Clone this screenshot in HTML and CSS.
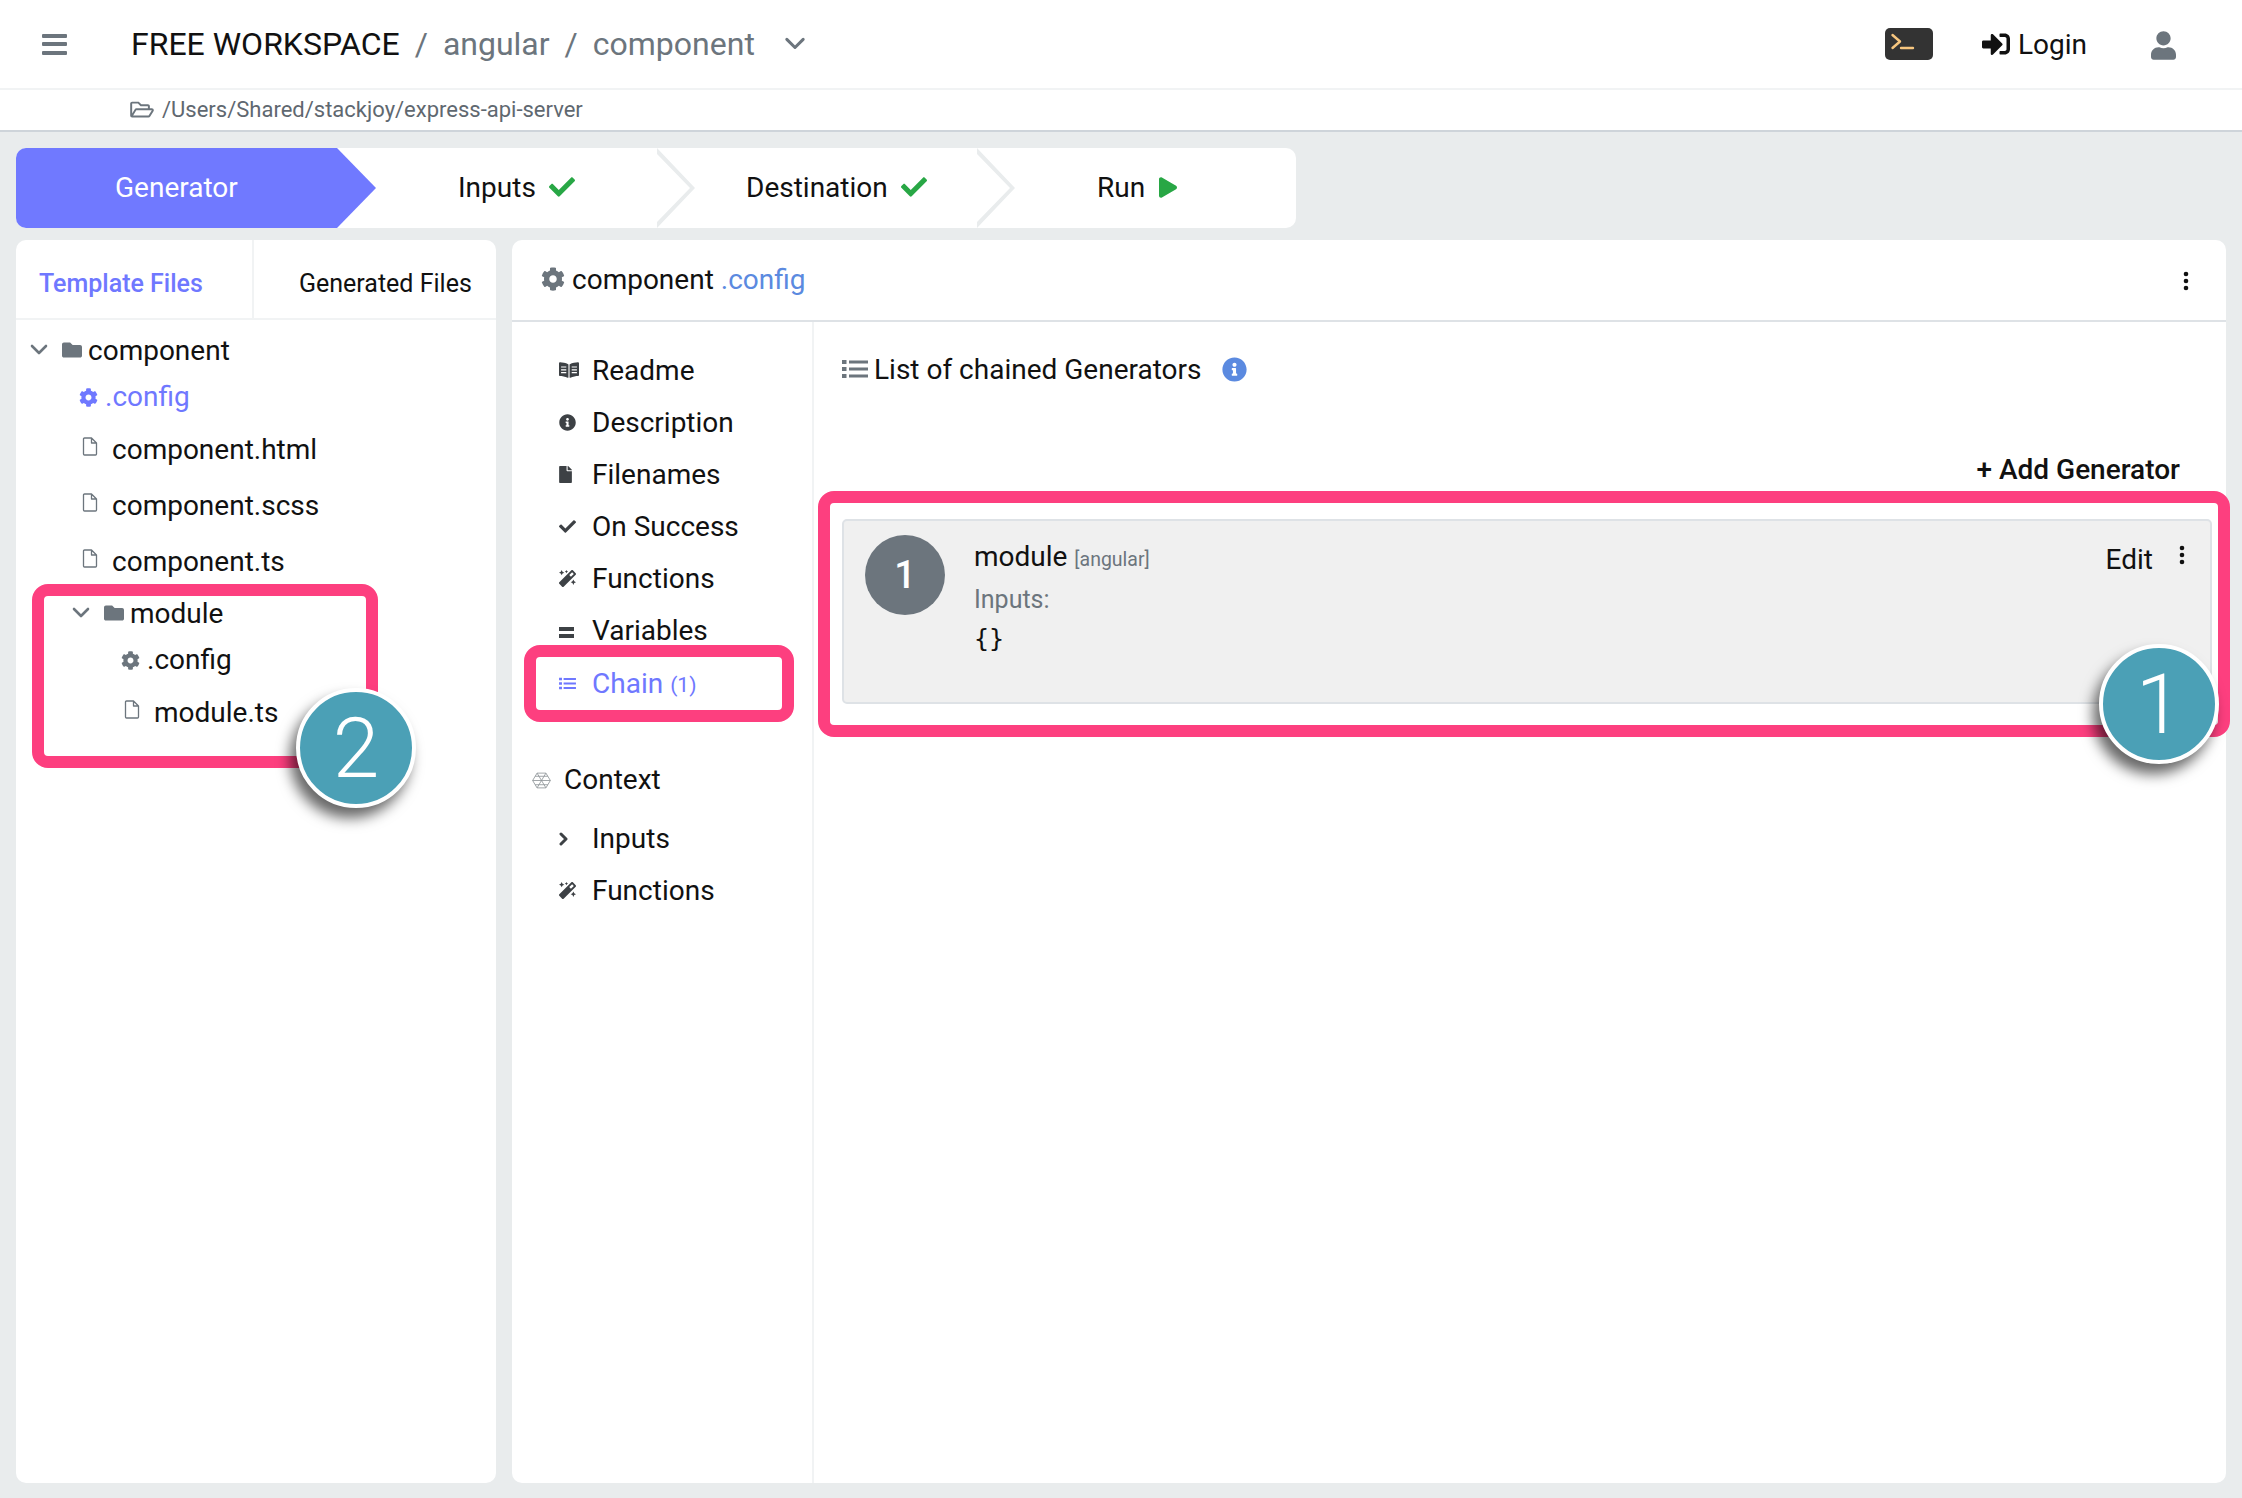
FILE: index.html
```html
<!DOCTYPE html>
<html lang="en">
<head>
<meta charset="utf-8">
<title>Generator</title>
<link rel="stylesheet" href="styles.css">
</head>
<body>
<svg class="defs" width="0" height="0" aria-hidden="true">
  <defs>
    <symbol id="i-cog" viewBox="0 0 512 512"><path d="M487.4 315.7l-42.6-24.6c4.3-23.2 4.3-47 0-70.2l42.6-24.6c4.9-2.8 7.1-8.6 5.5-14-11.1-35.6-30-67.8-54.7-94.6-3.8-4.1-10-5.1-14.8-2.3L380.8 110c-17.9-15.4-38.5-27.3-60.8-35.1V25.8c0-5.6-3.9-10.5-9.4-11.7-36.7-8.2-74.3-7.8-109.2 0-5.5 1.2-9.4 6.1-9.4 11.7V75c-22.2 7.9-42.8 19.8-60.8 35.1L88.7 85.5c-4.9-2.8-11-1.9-14.8 2.3-24.7 26.7-43.6 58.9-54.7 94.6-1.7 5.4.6 11.2 5.5 14L67.3 221c-4.3 23.2-4.3 47 0 70.2l-42.6 24.6c-4.9 2.8-7.1 8.6-5.5 14 11.1 35.6 30 67.8 54.7 94.6 3.8 4.1 10 5.1 14.8 2.3l42.6-24.6c17.9 15.4 38.5 27.3 60.8 35.1v49.2c0 5.6 3.9 10.5 9.4 11.7 36.7 8.2 74.3 7.8 109.2 0 5.5-1.2 9.4-6.1 9.4-11.7v-49.2c22.2-7.9 42.8-19.8 60.8-35.1l42.6 24.6c4.9 2.8 11 1.9 14.8-2.3 24.7-26.7 43.6-58.9 54.7-94.6 1.5-5.5-.7-11.3-5.6-14.1zM256 336c-44.1 0-80-35.9-80-80s35.9-80 80-80 80 35.9 80 80-35.9 80-80 80z"/></symbol>
    <symbol id="i-folder" viewBox="0 0 512 512"><path d="M464 128H272l-64-64H48C21.49 64 0 85.49 0 112v288c0 26.51 21.49 48 48 48h416c26.51 0 48-21.49 48-48V176c0-26.51-21.49-48-48-48z"/></symbol>
    <symbol id="i-file" viewBox="0 0 384 512"><path d="M224 136V0H24C10.7 0 0 10.7 0 24v464c0 13.3 10.7 24 24 24h336c13.3 0 24-10.7 24-24V160H248c-13.2 0-24-10.8-24-24zm160-14.1v6.1H256V0h6.1c6.4 0 12.5 2.5 17 7l97.9 98c4.5 4.5 7 10.6 7 16.9z"/></symbol>
    <symbol id="i-file-o" viewBox="0 0 16 19"><path d="M2.5 1h7l5 5v11a1 1 0 0 1-1 1h-11a1 1 0 0 1-1-1V2a1 1 0 0 1 1-1zM9.500 1v5h5" fill="none" stroke="currentColor" stroke-width="1.300" stroke-linejoin="round"/></symbol>
    <symbol id="i-folder-open" viewBox="0 0 576 512"><path d="M527.9 224H480v-48c0-26.500-21.500-48-48-48H272l-64-64H48C21.500 64 0 85.500 0 112v288c0 26.500 21.500 48 48 48h400c16.500 0 31.900-8.500 40.700-22.600l79.900-128c20-31.900-3-73.400-40.700-73.400zM48 118c0-3.300 2.700-6 6-6h134.100l64 64H426c3.300 0 6 2.700 6 6v42H152c-16.800 0-32.400 8.800-41.100 23.200L48 351.400zm400 282H72l77.200-128H528z"/></symbol>
    <symbol id="i-check" viewBox="0 0 512 512"><path d="M173.898 439.404l-166.400-166.400c-9.997-9.997-9.997-26.206 0-36.204l36.203-36.204c9.997-9.998 26.207-9.998 36.204 0L192 312.690 432.095 72.596c9.997-9.997 26.207-9.997 36.204 0l36.203 36.204c9.997 9.997 9.997 26.206 0 36.204l-294.400 294.401c-9.998 9.997-26.207 9.997-36.204-.001z"/></symbol>
    <symbol id="i-play" viewBox="0 0 448 512"><path d="M424.400 214.700L72.400 6.600C43.800-10.300 0 6.100 0 47.900V464c0 37.500 40.700 60.100 72.400 41.300l352-208c31.400-18.500 31.500-64.100 0-82.600z"/></symbol>
    <symbol id="i-login" viewBox="0 0 512 512"><path d="M416 448h-84c-6.600 0-12-5.400-12-12v-40c0-6.600 5.400-12 12-12h84c17.700 0 32-14.300 32-32V160c0-17.700-14.300-32-32-32h-84c-6.600 0-12-5.400-12-12V76c0-6.600 5.400-12 12-12h84c53 0 96 43 96 96v192c0 53-43 96-96 96zm-47-201L201 79c-15-15-41-4.500-41 17v96H24c-13.300 0-24 10.700-24 24v96c0 13.300 10.700 24 24 24h136v96c0 21.500 26 32 41 17l168-168c9.300-9.400 9.300-24.600 0-34z"/></symbol>
    <symbol id="i-user" viewBox="0 0 448 512"><path d="M224 256c70.700 0 128-57.300 128-128S294.700 0 224 0 96 57.300 96 128s57.300 128 128 128zm89.600 32h-16.700c-22.200 10.200-46.900 16-72.900 16s-50.600-5.800-72.900-16h-16.700C60.200 288 0 348.200 0 422.400V464c0 26.500 21.500 48 48 48h352c26.500 0 48-21.500 48-48v-41.600c0-74.200-60.200-134.400-134.400-134.400z"/></symbol>
    <symbol id="i-info" viewBox="0 0 512 512"><path d="M256 8C119.043 8 8 119.083 8 256c0 136.997 111.043 248 248 248s248-111.003 248-248C504 119.083 392.957 8 256 8zm0 110c23.196 0 42 18.804 42 42s-18.804 42-42 42-42-18.804-42-42 18.804-42 42-42zm56 254c0 6.627-5.373 12-12 12h-88c-6.627 0-12-5.373-12-12v-24c0-6.627 5.373-12 12-12h12v-64h-12c-6.627 0-12-5.373-12-12v-24c0-6.627 5.373-12 12-12h64c6.627 0 12 5.373 12 12v100h12c6.627 0 12 5.373 12 12v24z"/></symbol>
    <symbol id="i-book" viewBox="0 0 576 512"><path d="M542.220 32.050c-54.800 3.110-163.720 14.430-230.960 55.590-4.640 2.840-7.270 7.890-7.270 13.170v363.870c0 11.550 12.630 18.850 23.280 13.490 69.180-34.820 169.230-44.320 218.700-46.920 16.890-.89 30.020-14.430 30.020-30.660V62.750c.01-17.710-15.350-31.740-33.770-30.700zM264.730 87.640C197.500 46.480 88.580 35.170 33.780 32.050 15.360 31.010 0 45.040 0 62.750V400.600c0 16.240 13.130 29.780 30.020 30.660 49.490 2.600 149.590 12.110 218.770 46.950 10.620 5.350 23.210-1.940 23.210-13.460V100.630c0-5.290-2.620-10.140-7.270-12.990z"/><path d="M60 170h150M60 250h150M60 330h150M366 170h150M366 250h150M366 330h150" stroke="#fff" stroke-width="34"/></symbol>
    <symbol id="i-magic" viewBox="0 0 512 512"><path d="M224 96l16-32 32-16-32-16-16-32-16 32-32 16 32 16 16 32zM80 160l26.660-53.330L160 80l-53.340-26.670L80 0 53.340 53.330 0 80l53.340 26.670L80 160zm352 128l-26.660 53.330L352 368l53.340 26.670L432 448l26.660-53.330L512 368l-53.340-26.670L432 288zm70.620-193.770L417.770 9.380C411.530 3.120 403.340 0 395.150 0c-8.190 0-16.380 3.120-22.630 9.380L9.380 372.520c-12.500 12.500-12.500 32.760 0 45.250l84.850 84.850c6.250 6.250 14.440 9.370 22.620 9.370 8.190 0 16.380-3.120 22.630-9.370l363.140-363.150c12.500-12.480 12.500-32.750 0-45.240zM359.450 203.460l-50.910-50.910 86.600-86.600 50.910 50.910-86.600 86.600z"/></symbol>
    <symbol id="i-list" viewBox="0 0 26 20"><path d="M0 1h4.500v4H0zM0 8h4.500v4H0zM0 15h4.500v4H0zM7 1.500h19v3H7zM7 8.500h19v3H7zM7 15.500h19v3H7z"/></symbol>
    <symbol id="i-dots" viewBox="0 0 6 20"><circle cx="3" cy="3" r="2.300"/><circle cx="3" cy="10" r="2.300"/><circle cx="3" cy="17" r="2.300"/></symbol>
    <symbol id="i-chev" viewBox="0 0 18 12"><path d="M2 2l7 7 7-7" fill="none" stroke="currentColor" stroke-width="2.600" stroke-linecap="round" stroke-linejoin="round"/></symbol>
  </defs>
</svg>

<header class="topbar">
  <button class="burger" aria-label="Menu"><span></span><span></span><span></span></button>
  <div class="crumbs">
    <span class="crumb-root">FREE WORKSPACE</span>
    <span class="crumb-sep">/</span>
    <span class="crumb">angular</span>
    <span class="crumb-sep">/</span>
    <span class="crumb">component</span>
    <svg class="crumb-chev"><use href="#i-chev"/></svg>
  </div>
  <div class="top-actions">
    <svg class="terminal" viewBox="0 0 48 32"><rect width="48" height="32" rx="5" fill="#333"/><path d="M7.500 7l7.500 6.500L7.500 20" fill="none" stroke="#f7c67f" stroke-width="2.400" stroke-linecap="round" stroke-linejoin="round"/><path d="M16 20h12" stroke="#f7c67f" stroke-width="2.400" stroke-linecap="round"/></svg>
    <span class="login"><svg class="login-icon"><use href="#i-login"/></svg>Login</span>
    <svg class="user-icon"><use href="#i-user"/></svg>
  </div>
</header>
<div class="pathbar">
  <svg class="path-icon"><use href="#i-folder-open"/></svg>
  <span>/Users/Shared/stackjoy/express-api-server</span>
</div>

<main class="workspace">
  <nav class="stepper">
    <div class="step step-active">Generator</div>
    <div class="step step-inputs">Inputs<svg class="step-check"><use href="#i-check"/></svg><svg class="step-sep" viewBox="0 0 38 80"><path d="M0 0v6l33 34L0 74v6l38-40z" /></svg></div>
    <div class="step step-dest">Destination<svg class="step-check"><use href="#i-check"/></svg><svg class="step-sep" viewBox="0 0 38 80"><path d="M0 0v6l33 34L0 74v6l38-40z" /></svg></div>
    <div class="step step-run">Run<svg class="step-play"><use href="#i-play"/></svg></div>
  </nav>

  <div class="panels">
    <aside class="files">
      <div class="tabs">
        <div class="tab tab-active">Template Files</div>
        <div class="tab tab-plain">Generated Files</div>
      </div>
      <ul class="tree">
        <li class="row row-folder d0"><svg class="t-chev"><use href="#i-chev"/></svg><svg class="t-folder"><use href="#i-folder"/></svg>component</li>
        <li class="row row-config d0 is-current"><svg class="t-cog"><use href="#i-cog"/></svg>.config</li>
        <li class="row row-file d0"><svg class="t-file"><use href="#i-file-o"/></svg>component.html</li>
        <li class="row row-file d0"><svg class="t-file"><use href="#i-file-o"/></svg>component.scss</li>
        <li class="row row-file d0"><svg class="t-file"><use href="#i-file-o"/></svg>component.ts</li>
        <li class="row row-folder d1"><svg class="t-chev"><use href="#i-chev"/></svg><svg class="t-folder"><use href="#i-folder"/></svg>module</li>
        <li class="row row-config d1"><svg class="t-cog"><use href="#i-cog"/></svg>.config</li>
        <li class="row row-file d1"><svg class="t-file"><use href="#i-file-o"/></svg>module.ts</li>
      </ul>
    </aside>

    <section class="editor">
      <div class="editor-head">
        <svg class="head-cog"><use href="#i-cog"/></svg>
        <span>component</span><span class="head-ext">.config</span>
        <svg class="head-dots"><use href="#i-dots"/></svg>
      </div>
      <div class="editor-body">
        <ul class="side">
          <li class="side-row"><svg class="s-icon s-book"><use href="#i-book"/></svg>Readme</li>
          <li class="side-row"><svg class="s-icon s-round"><use href="#i-info"/></svg>Description</li>
          <li class="side-row"><svg class="s-icon s-file"><use href="#i-file"/></svg>Filenames</li>
          <li class="side-row"><svg class="s-icon s-check"><use href="#i-check"/></svg>On Success</li>
          <li class="side-row"><svg class="s-icon s-magic"><use href="#i-magic"/></svg>Functions</li>
          <li class="side-row"><span class="s-icon s-equals"></span>Variables</li>
          <li class="side-row side-current"><svg class="s-icon s-list"><use href="#i-list"/></svg>Chain<span class="side-count">(1)</span></li>
          <li class="side-row side-context"><svg class="s-hex" viewBox="0 0 18 16"><path d="M4.800 1h8.400L17.400 8l-4.200 7H4.800L.6 8zM4.800 1l8.400 14M13.200 1L4.800 15M.6 8h16.800M3 4h12M3 12h12" fill="none" stroke="#8f9599" stroke-width=".8"/></svg>Context</li>
          <li class="side-row side-first"><svg class="s-icon s-chevr" viewBox="0 0 10 14"><path d="M2 2l5 5-5 5" fill="none" stroke="currentColor" stroke-width="3" stroke-linecap="round" stroke-linejoin="round"/></svg>Inputs</li>
          <li class="side-row"><svg class="s-icon s-magic"><use href="#i-magic"/></svg>Functions</li>
        </ul>
        <div class="chain">
          <h2 class="chain-title"><svg class="chain-list"><use href="#i-list"/></svg>List of chained Generators<svg class="chain-info"><use href="#i-info"/></svg></h2>
          <div class="chain-add">+ Add Generator</div>
          <article class="card">
            <div class="card-num">1</div>
            <div class="card-main">
              <div class="card-title">module <span class="card-tag">[angular]</span></div>
              <div class="card-label">Inputs:</div>
              <code class="card-code">{}</code>
            </div>
            <div class="card-edit">Edit</div>
            <svg class="card-dots"><use href="#i-dots"/></svg>
          </article>
        </div>
      </div>
    </section>
  </div>
</main>

<div class="mark mark-tree"></div>
<div class="mark mark-chain"></div>
<div class="mark mark-card"></div>
<div class="badge badge-two">2</div>
<div class="badge badge-one">1</div>
</body>
</html>
```
FILE: styles.css
```css
* { box-sizing: border-box; }
html, body { margin: 0; padding: 0; }
body {
  width: 2242px;
  height: 1498px;
  overflow: hidden;
  position: relative;
  display: flex;
  flex-direction: column;
  background: #e9eced;
  color: #111;
  font-family: Roboto, "Liberation Sans", sans-serif;
  font-size: 28px;
}
.defs { position: absolute; }
svg { fill: currentColor; display: block; flex: none; }
ul { list-style: none; margin: 0; padding: 0; }

/* top bar */
.topbar {
  height: 90px;
  flex: none;
  display: flex;
  align-items: center;
  background: #fff;
  border-bottom: 2px solid #f1f3f4;
  padding: 0 0 0 42px;
}
.burger {
  width: 25px;
  height: 21px;
  padding: 0;
  border: 0;
  background: none;
  display: flex;
  flex-direction: column;
  justify-content: space-between;
}
.burger span { display: block; height: 4px; border-radius: 1px; background: #6c757d; }
.crumbs {
  display: flex;
  align-items: center;
  margin-left: 64px;
  font-size: 32px;
  color: #6c757d;
}
.crumb-root { color: #111; }
.crumb-sep { margin: 0 15px; }
.crumb-chev { width: 22px; height: 14px; margin-left: 29px; color: #6c757d; }
.top-actions { display: flex; align-items: center; margin-left: auto; padding-right: 66px; }
.terminal { width: 48px; height: 32px; }
.login { display: flex; align-items: center; margin-left: 49px; font-size: 28px; }
.login-icon { width: 28px; height: 28px; margin-right: 8px; }
.user-icon { width: 25px; height: 29px; margin-left: 64px; margin-top: 2px; color: #6c757d; }

.pathbar {
  height: 42px;
  flex: none;
  display: flex;
  align-items: center;
  background: #fff;
  border-bottom: 2px solid #ced4da;
  padding: 0 0 2px 130px;
  font-size: 22px;
  color: #5f6870;
}
.path-icon { width: 24px; height: 21px; margin-right: 8px; color: #6c757d; }

/* stepper */
.workspace { flex: 1; display: flex; flex-direction: column; padding: 16px 16px 15px; min-height: 0; }
.stepper {
  width: 1280px;
  height: 80px;
  flex: none;
  display: flex;
  background: #fff;
  border-radius: 10px;
  overflow: hidden;
}
.step { display: flex; align-items: center; height: 80px; font-size: 28px; padding-bottom: 2px; }
.step-active {
  width: 360px;
  padding-left: 99px;
  color: #fff;
  background: #7079ff;
  clip-path: polygon(0 0, 321px 0, 100% 50%, 321px 100%, 0 100%);
}
.step-inputs { width: 319px; padding-left: 82px; }
.step-dest { width: 320px; padding-left: 51px; }
.step-run { width: 281px; padding-left: 82px; }
.step-check { width: 26px; height: 26px; margin-left: 13px; color: #28a745; }
.step-play { width: 18px; height: 21px; margin-left: 14px; color: #28a745; }
.step-sep { width: 38px; height: 80px; margin-left: auto; margin-top: 2px; color: #e9eced; }

/* panels */
.panels { flex: 1; display: flex; gap: 16px; margin-top: 12px; min-height: 0; }
.files { width: 480px; flex: none; background: #fff; border-radius: 10px; overflow: hidden; }
.tabs { display: flex; height: 80px; border-bottom: 2px solid #f1f3f4; }
.tab { display: flex; align-items: center; font-size: 25px; padding-top: 9px; }
.tab-active { width: 238px; padding-left: 23px; color: #6f78ff; font-weight: 500; border-right: 2px solid #f1f3f4; }
.tab-plain { padding-left: 45px; color: #111; }
.tree { padding-top: 6px; }
.row { display: flex; align-items: center; }
.row-folder { height: 48px; }
.row-config { height: 47px; padding-bottom: 2px; }
.row-file { height: 56px; }
.row-folder.d0 { padding-left: 14px; }
.row-folder.d1 { padding-left: 56px; }
.row-config.d0 { padding-left: 63px; }
.row-config.d1 { padding-left: 105px; }
.row-file.d0 { padding-left: 66px; }
.row-file.d1 { padding-left: 108px; }
.is-current { color: #6f78ff; }
.t-chev { width: 18px; height: 12px; margin-right: 14px; color: #6c757d; }
.t-folder { width: 20px; height: 20px; margin-right: 6px; color: #6c757d; }
.t-cog { width: 19px; height: 19px; margin-right: 7px; margin-top: 2px; color: #6c757d; }
.is-current .t-cog { color: #6f78ff; }
.t-file { width: 16px; height: 19px; margin-right: 14px; margin-top: -5px; color: #6c757d; }

/* editor */
.editor { flex: 1; min-width: 0; background: #fff; border-radius: 10px; overflow: hidden; display: flex; flex-direction: column; }
.editor-head {
  height: 82px;
  flex: none;
  display: flex;
  align-items: center;
  padding: 0 37px 2px 29px;
  border-bottom: 2px solid #dee2e6;
}
.head-cog { width: 24px; height: 24px; margin-right: 7px; color: #6c757d; }
.head-ext { margin-left: 7px; color: #5b8ae0; }
.head-dots { width: 6px; height: 20px; margin-left: auto; margin-top: 4px; }
.editor-body { flex: 1; display: flex; min-height: 0; }
.side { width: 302px; flex: none; border-right: 2px solid #f1f3f4; padding-top: 22px; }
.side-row { height: 52px; display: flex; align-items: center; padding-left: 47px; }
.s-icon { width: 19px; height: 17px; margin-right: 14px; color: #3d4145; }
.s-book { width: 20px; height: 18px; margin-right: 13px; }
.s-round { width: 17px; height: 17px; margin-right: 16px; }
.s-file { width: 13px; height: 17px; margin-right: 20px; }
.s-check { width: 17px; height: 17px; margin-right: 16px; }
.s-magic { width: 17px; height: 17px; margin-right: 16px; }
.s-equals { width: 15px; height: 11px; margin: 4px 18px 0 0; border-top: 4px solid #3d4145; border-bottom: 4px solid #3d4145; }
.s-list { width: 17px; height: 13px; margin-right: 16px; color: #6f78ff; }
.side-current { color: #6f78ff; padding-top: 2px; }
.side-count { margin-left: 7px; font-size: 21px; padding-top: 3px; }
.side-context { margin-top: 45px; padding-left: 20px; }
.s-hex { width: 19px; height: 17px; margin-right: 13px; margin-top: 2px; }
.side-first { margin-top: 7px; }
.s-chevr { width: 10px; height: 14px; margin: 2px 23px 0 0; }
.chain { flex: 1; min-width: 0; padding: 28px 14px 0 28px; display: flex; flex-direction: column; }
.chain-title { display: flex; align-items: center; height: 38px; margin: 0; font-size: 28px; font-weight: 400; }
.chain-list { width: 26px; height: 20px; margin-right: 6px; color: #6c757d; }
.chain-info { width: 25px; height: 25px; margin-left: 21px; color: #5b8ae0; }
.chain-add { height: 38px; margin: 63px 32px 30px 0; line-height: 38px; text-align: right; font-weight: 500; font-size: 28px; }
.card {
  height: 185px;
  display: flex;
  align-items: flex-start;
  padding: 14px 25px 0 21px;
  background: #f0f0f0;
  border: 2px solid #dee2e6;
  border-radius: 5px;
}
.card-num {
  width: 80px;
  height: 80px;
  flex: none;
  border-radius: 50%;
  background: #6c757d;
  color: #fff;
  font-size: 38px;
  font-weight: 500;
  display: flex;
  align-items: center;
  justify-content: center;
}
.card-main { flex: 1; margin-left: 29px; margin-top: -1px; }
.card-title { height: 46px; line-height: 46px; }
.card-tag { font-size: 19.500px; color: #6c757d; }
.card-label { height: 40px; line-height: 40px; font-size: 25px; color: #6c757d; }
.card-code { display: block; height: 40px; line-height: 38px; font-family: "DejaVu Sans Mono", monospace; font-size: 25px; }
.card-edit { height: 52px; line-height: 52px; font-size: 28px; margin-top: -1px; }
.card-dots { width: 6px; height: 20px; margin: 10px 0 0 26px; }

/* annotation overlays */
.mark { position: absolute; border: 12px solid #fd3f7f; border-radius: 16px; }
.mark-tree { left: 32px; top: 584px; width: 346px; height: 184px; }
.mark-chain { left: 524px; top: 645px; width: 270px; height: 77px; }
.mark-card { left: 818px; top: 491px; width: 1412px; height: 246px; }
.badge {
  position: absolute;
  width: 120px;
  height: 120px;
  border-radius: 50%;
  border: 4px solid #fff;
  background: #4ba0b6;
  color: #fff;
  font-size: 84px;
  font-weight: 300;
  display: flex;
  align-items: center;
  justify-content: center;
  box-shadow: -6px 10px 14px rgba(0, 0, 0, .6);
}
.badge-two { left: 296px; top: 688px; }
.badge-one { left: 2099px; top: 644px; }
```
